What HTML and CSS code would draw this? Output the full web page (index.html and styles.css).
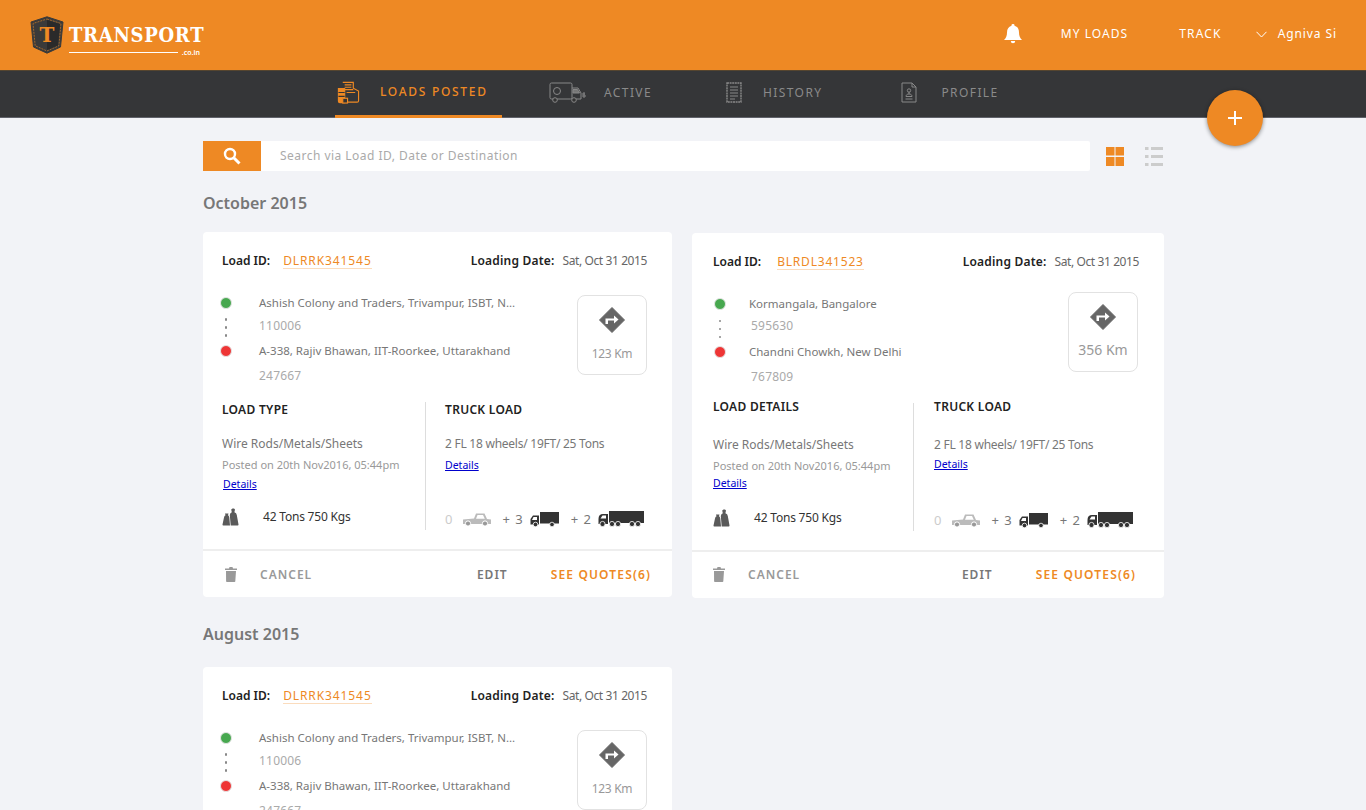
FILE: index.html
```html
<!DOCTYPE html>
<html lang="en">
<head>
<meta charset="utf-8">
<title>Transport</title>
<link rel="stylesheet" href="styles.css">
</head>
<body>
<svg class="defs" width="0" height="0">
  <symbol id="turn" viewBox="0 0 26 26"><path d="M13 0.5 25.5 13 13 25.5 0.5 13Z" fill="#666" stroke="#666" stroke-linejoin="round" stroke-width="1"/><path d="M8 18v-5.500h8.500V9.500l4.500 4-4.500 4v-3H10.500V18Z" fill="#fff" transform="translate(-1.500 -1)"/></symbol>
  <symbol id="weights" viewBox="0 0 17 18"><path d="M0.500 16.500 2 9.500Q2.300 7.800 3.500 7.300L3 5.500h3.500L6 7.300Q7 7.800 7.300 9.500L8 17.500H1.300Q.4 17.500.5 16.500Z" fill="#5a5a5a"/><path d="M8.700 17.500 7.800 7Q8 5 9.800 4.300L9.200 1.500 10.500.5h1.500l1 1-.6 2.800Q14.600 5 14.800 7L16.500 16.500Q16.600 17.500 15.700 17.500Z" fill="#5a5a5a"/></symbol>
  <symbol id="trash" viewBox="0 0 14 16"><path d="M1 2.500h4L5.500 1h3L9 2.500h4V4H1ZM2 5h10l-.7 10.200a.8.800 0 0 1-.8.800h-7.600a.8.800 0 0 1-.8-.8Z" fill="#999"/></symbol>
  <symbol id="pickup" viewBox="0 0 30 14"><path d="M1 7.500 12 6.500 14 1.500h8.500l2.500 5.500 4 .6v4.400H1Z" fill="#bbb"/><path d="M15.500 3h5.500l1.800 3.800h-8.800Z" fill="#fff"/><circle cx="6" cy="11.500" r="2.600" fill="#999" stroke="#fff"/><circle cx="23" cy="11.500" r="2.600" fill="#999" stroke="#fff"/></symbol>
  <symbol id="truck" viewBox="0 0 29 15"><path d="M10 0h19v11.500H10Z" fill="#333"/><path d="M9 3.500H3L.5 7v5.500H9Z" fill="#333"/><path d="M3.500 5H7v3H2Z" fill="#fff"/><circle cx="5.500" cy="12.500" r="2.300" fill="#333" stroke="#fff" stroke-width=".8"/><circle cx="22" cy="12.500" r="2.300" fill="#333" stroke="#fff" stroke-width=".8"/></symbol>
  <symbol id="trailer" viewBox="0 0 46 16"><path d="M11 0h35v12H11Z" fill="#333"/><path d="M10 3H5Q.5 3 .5 8v5H10Z" fill="#333"/><path d="M4.500 4.500h3.500v3H2.500Z" fill="#fff"/><g fill="#333" stroke="#fff" stroke-width=".8"><circle cx="4.500" cy="13" r="2.600"/><circle cx="14" cy="13" r="2.600"/><circle cx="20" cy="13" r="2.600"/><circle cx="34" cy="13" r="2.600"/><circle cx="40" cy="13" r="2.600"/></g></symbol>
</svg>

<header class="topbar">
  <a class="logo">
    <svg class="logo-mark" viewBox="0 0 34 38" width="34" height="38"><path d="M17 .8 33 6l-2.500 25L17 37.200 3.500 31 1 6Z" fill="#3a3a3a" stroke="#3a3a3a"/><path d="M17 3 31 7.500l-2.200 22.300L17 35 5.200 29.800 3 7.500Z" fill="none" stroke="#ee8924" stroke-width=".6" stroke-dasharray="2 1"/><path d="M17 4 30 8l-2 21.500L17 34Z" fill="#2a2a2a"/><text x="17" y="26" text-anchor="middle" class="logo-t">T</text></svg>
    <span class="logo-text">
      <span class="logo-name">TRANSPORT</span>
      <span class="logo-rule"></span>
      <span class="logo-tld">.co.in</span>
    </span>
  </a>
  <nav class="topnav">
    <svg class="bell" viewBox="0 0 18 20" width="18" height="20"><path d="M9 0a1.500 1.500 0 0 1 1.500 1.700C13.500 2.500 15 5 15 8.500c0 3.500 1 5.500 3 7.500H0c2-2 3-4 3-7.500C3 5 4.500 2.500 7.500 1.700A1.500 1.500 0 0 1 9 0ZM6.800 17h4.400a2.200 2.200 0 0 1-4.400 0Z" fill="#fff"/></svg>
    <a class="topnav-link my-loads">MY LOADS</a>
    <a class="topnav-link track">TRACK</a>
    <svg class="chev" viewBox="0 0 11 7" width="11" height="7"><path d="M.5.800 5.500 6 10.500.800" fill="none" stroke="#fff" stroke-width="1"/></svg>
    <a class="topnav-link user">Agniva Si</a>
  </nav>
</header>

<nav class="tabs">
  <a class="tab tab-active">
    <svg class="tab-icon" viewBox="0 0 24 24" width="23" height="23" fill="none" stroke="#ee8924" stroke-width="1.200"><path d="M6 1.500h11v6l5.500 3v10a1.500 1.500 0 0 1-1.500 1.500H11"/><path d="M8 4h7M8 6.500h7M8 9h9M10 12h9"/><path d="M1.500 8h6.500v14.500H3A1.500 1.500 0 0 1 1.500 21Z" fill="#ee8924"/><path d="M1.500 12h6.500M1.500 16h6.500" stroke="#333"/><rect x="6" y="18" width="5" height="5" fill="#333"/></svg>
    <span>LOADS POSTED</span>
  </a>
  <a class="tab tab-active-end"></a>
  <a class="tab">
    <svg class="tab-icon" viewBox="0 0 38 21" width="38" height="21" fill="none" stroke="#888" stroke-width="1"><rect x="1" y="1" width="22" height="16" rx="1.500"/><circle cx="8" cy="9" r="3.500"/><path d="M23 6h6l3 5v6h-9"/><path d="M24 7.500h4.500l2 3.500H24Z" fill="#777"/><circle cx="6" cy="18" r="2.300" fill="#333"/><circle cx="25" cy="18" r="2.300" fill="#333"/><path d="M33 12h3M33 14h4M35 10v6"/></svg>
    <span>ACTIVE</span>
  </a>
  <a class="tab tab-history">
    <svg class="tab-icon" viewBox="0 0 16 21" width="16" height="21" fill="none" stroke="#888" stroke-width="1"><path d="M1 1h14v19H1Z" stroke-dasharray="2 .6" stroke-width="1.400"/><path d="M4 5h8M4 8h8M4 11h8M4 14h8M4 17h5"/></svg>
    <span>HISTORY</span>
  </a>
  <a class="tab tab-profile">
    <svg class="tab-icon" viewBox="0 0 16 21" width="16" height="21" fill="none" stroke="#888" stroke-width="1"><path d="M1 1h10l4 4v15H1Z"/><path d="M11 1v4h4"/><circle cx="8" cy="8.500" r="1.700"/><path d="M8 10v2M5 14.500c0-1.500 1-2.500 3-2.500s3 1 3 2.500ZM4.500 17h7"/></svg>
    <span>PROFILE</span>
  </a>
</nav>

<button class="fab" type="button" aria-label="Add load">
  <svg viewBox="0 0 16 16" width="16" height="16"><path d="M7 1h2v6h6v2H9v6H7V9H1V7h6Z" fill="#fff"/></svg>
</button>

<main class="content">
  <div class="search-row">
    <button class="search-btn" type="button" aria-label="Search">
      <svg viewBox="0 0 18 18" width="18" height="18" fill="none" stroke="#fff"><circle cx="7" cy="7" r="5" stroke-width="2.400"/><path d="M11 11l5.500 5.500" stroke-width="3"/></svg>
    </button>
    <div class="search-input">Search via Load ID, Date or Destination</div>
    <div class="views">
      <svg viewBox="0 0 18 19" width="18" height="19" fill="#ee8924"><rect width="8.500" height="8.500"/><rect x="9.500" width="8.500" height="8.500"/><rect y="10" width="8.500" height="9"/><rect x="9.500" y="10" width="8.500" height="9"/></svg>
      <svg viewBox="0 0 18 19" width="18" height="19" fill="#ccc"><rect width="3.500" height="3"/><rect x="6" width="12" height="3"/><rect y="8" width="3.500" height="3"/><rect x="6" y="8" width="12" height="3"/><rect y="16" width="3.500" height="3"/><rect x="6" y="16" width="12" height="3"/></svg>
    </div>
  </div>

  <h2 class="month">October 2015</h2>
  <div class="cards">
    <article class="card card-a">
      <div class="card-head">
        <div><b class="lbl">Load ID:</b><a class="load-id">DLRRK341545</a></div>
        <div><b class="lbl lbl-date">Loading Date:</b><span class="date">Sat, Oct 31 2015</span></div>
      </div>
      <div class="route">
        <div class="stops">
          <div class="stop"><i class="dot green"></i><span class="addr">Ashish Colony and Traders, Trivampur, ISBT, N...</span></div>
          <div class="pin"><span class="dots"><i></i><i></i><i></i></span><span>110006</span></div>
          <div class="stop"><i class="dot red"></i><span class="addr">A-338, Rajiv Bhawan, IIT-Roorkee, Uttarakhand</span></div>
          <div class="pin"><span class="dots"></span><span>247667</span></div>
        </div>
        <div class="dist"><svg width="26" height="26"><use href="#turn"/></svg><span>123 Km</span></div>
      </div>
      <div class="info">
        <div class="col col-l">
          <h3>LOAD TYPE</h3>
          <p class="txt">Wire Rods/Metals/Sheets</p>
          <p class="sub">Posted on 20th Nov2016, 05:44pm</p>
          <a class="more more-l">Details</a>
          <div class="tons"><svg width="17" height="18"><use href="#weights"/></svg><span>42 Tons 750 Kgs</span></div>
        </div>
        <div class="col col-r">
          <h3>TRUCK LOAD</h3>
          <p class="txt">2 FL 18 wheels/ 19FT/ 25 Tons</p>
          <a class="more">Details</a>
          <div class="fleet">
            <span class="zero">0</span><svg width="30" height="14"><use href="#pickup"/></svg>
            <span class="n">+ 3</span><svg width="29" height="15"><use href="#truck"/></svg>
            <span class="n n2">+ 2</span><svg width="46" height="16"><use href="#trailer"/></svg>
          </div>
        </div>
      </div>
      <footer class="card-foot">
        <svg width="14" height="16"><use href="#trash"/></svg>
        <a class="cancel">CANCEL</a>
        <a class="edit">EDIT</a>
        <a class="quotes">SEE QUOTES(6)</a>
      </footer>
    </article>

    <article class="card card-b">
      <div class="card-head">
        <div><b class="lbl">Load ID:</b><a class="load-id">BLRDL341523</a></div>
        <div><b class="lbl lbl-date">Loading Date:</b><span class="date">Sat, Oct 31 2015</span></div>
      </div>
      <div class="route">
        <div class="stops">
          <div class="stop"><i class="dot green"></i><span class="addr">Kormangala, Bangalore</span></div>
          <div class="pin"><span class="dots"><i></i><i></i><i></i></span><span>595630</span></div>
          <div class="stop"><i class="dot red"></i><span class="addr">Chandni Chowkh, New Delhi</span></div>
          <div class="pin"><span class="dots"></span><span>767809</span></div>
        </div>
        <div class="dist"><svg width="26" height="26"><use href="#turn"/></svg><span>356 Km</span></div>
      </div>
      <div class="info">
        <div class="col col-l">
          <h3>LOAD DETAILS</h3>
          <p class="txt">Wire Rods/Metals/Sheets</p>
          <p class="sub">Posted on 20th Nov2016, 05:44pm</p>
          <a class="more">Details</a>
          <div class="tons"><svg width="17" height="18"><use href="#weights"/></svg><span>42 Tons 750 Kgs</span></div>
        </div>
        <div class="col col-r">
          <h3>TRUCK LOAD</h3>
          <p class="txt">2 FL 18 wheels/ 19FT/ 25 Tons</p>
          <a class="more">Details</a>
          <div class="fleet">
            <span class="zero">0</span><svg width="30" height="14"><use href="#pickup"/></svg>
            <span class="n">+ 3</span><svg width="29" height="15"><use href="#truck"/></svg>
            <span class="n n2">+ 2</span><svg width="46" height="16"><use href="#trailer"/></svg>
          </div>
        </div>
      </div>
      <footer class="card-foot">
        <svg width="14" height="16"><use href="#trash"/></svg>
        <a class="cancel">CANCEL</a>
        <a class="edit">EDIT</a>
        <a class="quotes">SEE QUOTES(6)</a>
      </footer>
    </article>
  </div>

  <h2 class="month month-2">August 2015</h2>
  <div class="cards">
    <article class="card card-a">
      <div class="card-head">
        <div><b class="lbl">Load ID:</b><a class="load-id">DLRRK341545</a></div>
        <div><b class="lbl lbl-date">Loading Date:</b><span class="date">Sat, Oct 31 2015</span></div>
      </div>
      <div class="route">
        <div class="stops">
          <div class="stop"><i class="dot green"></i><span class="addr">Ashish Colony and Traders, Trivampur, ISBT, N...</span></div>
          <div class="pin"><span class="dots"><i></i><i></i><i></i></span><span>110006</span></div>
          <div class="stop"><i class="dot red"></i><span class="addr">A-338, Rajiv Bhawan, IIT-Roorkee, Uttarakhand</span></div>
          <div class="pin"><span class="dots"></span><span>247667</span></div>
        </div>
        <div class="dist"><svg width="26" height="26"><use href="#turn"/></svg><span>123 Km</span></div>
      </div>
    </article>
  </div>
</main>
</body>
</html>
```
FILE: styles.css
```css
* { box-sizing: border-box; }
html, body { margin: 0; height: 810px; overflow: hidden; }
body {
  position: relative;
  background: #f2f3f7;
  font-family: "Noto Sans", "Open Sans", sans-serif;
  color: #777;
}
a { display: block; }
h2, h3, p { margin: 0; }
.defs { position: absolute; }

.topbar {
  height: 70px;
  background: #ee8924;
  display: flex;
  align-items: center;
  justify-content: space-between;
  padding: 0 29px 0 30px;
}
.logo { display: flex; align-items: flex-start; gap: 5px; height: 38px; margin-top: -1px; }
.logo-t { font: 700 20px "DejaVu Serif", serif; fill: #ee8924; }
.logo-text { display: block; width: 135px; color: #fff; margin-top: 9px; position: relative; }
.logo-name { display: block; font: 700 20px/20px "DejaVu Serif Condensed", "DejaVu Serif", serif; font-stretch: condensed; letter-spacing: .7px; white-space: nowrap; }
.logo-rule { display: block; height: 1px; width: 109px; background: #fff; margin-top: 7px; }
.logo-tld { position: absolute; right: 4px; top: 24px; font-size: 7px; font-weight: 600; line-height: 8px; }

.topnav { display: flex; align-items: center; color: #fff; padding-bottom: 2px; }
.topnav-link { font-size: 12px; line-height: 16px; }
.bell { margin-right: 39px; }
.my-loads { margin-right: 51px; letter-spacing: 1.050px; }
.track { margin-right: 34px; letter-spacing: 1.200px; }
.chev { margin-right: 11px; }
.user { letter-spacing: .9px; }

.tabs {
  height: 48px;
  background: #353638;
  display: flex;
  align-items: stretch;
  padding-left: 335px;
  border-top: 1px solid #55452f;
  border-bottom: 1px solid #60626a;
}
.tab {
  display: flex;
  align-items: center;
  gap: 17px;
  font-size: 12px;
  letter-spacing: 1.400px;
  color: #8a8a8a;
  line-height: 16px;
  padding-bottom: 3px;
}
.tab-active {
  width: 167px;
  padding-left: 2px;
  padding-bottom: 2px;
  gap: 20px;
  color: #ee8924;
  font-weight: 500;
  letter-spacing: 1.700px;
  border-bottom: 3px solid #ee8924;
  margin-bottom: -1px;
}
.tab-active-end { width: 47px; }
.tab-history { margin-left: 74px; gap: 21px; }
.tab-profile { margin-left: 79px; gap: 24px; }

.fab {
  position: absolute;
  left: 1207px;
  top: 90px;
  width: 56px;
  height: 56px;
  border: 0;
  border-radius: 50%;
  background: #ee8924;
  box-shadow: 0 1px 4px rgba(0,0,0,.45);
  display: flex;
  align-items: center;
  justify-content: center;
  padding: 0;
}

.content { width: 961px; margin-left: 203px; padding-top: 23px; }
.search-row { display: flex; align-items: center; height: 30px; }
.search-btn {
  width: 58px;
  height: 30px;
  border: 0;
  padding: 0;
  background: #ee8924;
  display: flex;
  align-items: center;
  justify-content: center;
}
.search-input {
  width: 829px;
  height: 30px;
  background: #fff;
  border-radius: 0 2px 2px 0;
  padding-left: 19px;
  font-size: 12px;
  line-height: 30px;
  letter-spacing: .47px;
  color: #aaa;
}
.views { display: flex; gap: 21px; margin-left: 16px; }

.month { font-size: 16px; line-height: 22px; font-weight: 600; color: #777; margin: 21px 0 18px; }
.month-2 { margin: 25px 0 22px; }

.cards { display: flex; gap: 20px; align-items: flex-start; }
.card { background: #fff; border-radius: 4px; display: flex; flex-direction: column; padding-top: 20px; height: 365px; }
.card-a { width: 469px; }
.card-b { width: 472px; margin-top: 1px; }

.card-head { display: flex; justify-content: space-between; height: 17px; align-items: center; font-size: 12px; padding-right: 25px; }
.card-a .card-head { padding-left: 19px; }
.card-b .card-head { padding-left: 21px; }
.card-head > div { display: flex; align-items: center; }
.lbl { font-weight: 600; color: #222; }
.lbl-date { letter-spacing: .2px; }
.load-id { margin-left: 13px; color: #ee8924; letter-spacing: .9px; border-bottom: 1px solid #fbdcbd; line-height: 15px; }
.card-b .load-id { margin-left: 16px; letter-spacing: .8px; }
.date { margin-left: 8px; color: #666; letter-spacing: -.4px; }

.route { display: flex; justify-content: space-between; padding-right: 25px; height: 80px; }
.card-a .route { padding-left: 17px; margin-top: 26px; }
.card-b .route { padding-left: 22px; margin-top: 22px; padding-right: 26px; }
.stops { display: flex; flex-direction: column; font-size: 11.500px; }
.card-b .stops { padding-top: 3px; }
.stop, .pin { display: flex; align-items: center; flex: none; }
.stop { height: 18px; }
.pin { color: #aaa; font-size: 12px; letter-spacing: .2px; }
.card-a .stops { margin-top: -1px; }
.card-a .pin:nth-child(2) { height: 26px; }
.card-a .stop:nth-child(3) { height: 26px; }
.card-a .pin:nth-child(4) { height: 22px; }
.card-b .pin:nth-child(2) { height: 24px; }
.card-b .stop:nth-child(3) { height: 30px; }
.card-b .pin:nth-child(4) { height: 18px; }
.addr { margin-left: 27px; padding-bottom: 2px; white-space: nowrap; color: #777; }
.card-b .addr { margin-left: 23px; }
.dot { width: 12px; height: 12px; border-radius: 50%; border: 1px solid #e4e4e4; flex: none; }
.green { background: #47a84f; }
.red { background: #ee3535; }
.dots { width: 12px; margin-right: 27px; padding-top: 5px; display: flex; flex-direction: column; align-items: center; gap: 5.500px; }
.card-b .dots { margin-right: 25px; padding-top: 8px; }
.dots i { width: 2.500px; height: 2.500px; border-radius: 50%; background: #888; }
.dist {
  width: 70px;
  height: 80px;
  border: 1px solid #e2e2e2;
  border-radius: 8px;
  display: flex;
  flex-direction: column;
  align-items: center;
  padding-top: 11px;
  gap: 13px;
  font-size: 12px;
  line-height: 16px;
  color: #999;
  letter-spacing: -.3px;
}
.card-b .dist { font-size: 14px; letter-spacing: 0; gap: 12px; }

.info { display: flex; }
.card-a .info { margin-top: 27px; padding-left: 19px; }
.card-b .info { margin-top: 31px; padding-left: 21px; }
.col { height: 128px; display: flex; flex-direction: column; }
.col-l { width: 203px; }
.col-r { border-left: 1px solid #ddd; padding-left: 19px; }
.card-b .col-l { width: 200px; }
.card-b .col-r { padding-left: 20px; }
h3 { font-size: 12px; line-height: 16px; font-weight: 600; color: #222; letter-spacing: .3px; }
.card-b h3 { margin-top: -4px; }
.txt { font-size: 12px; line-height: 16px; color: #777; margin-top: 18px; white-space: nowrap; }
.card-b .txt { margin-top: 22px; }
.col-r .txt { letter-spacing: -.25px; }
.sub { font-size: 11px; line-height: 14px; color: #999; margin-top: 6px; white-space: nowrap; }
.more { font-size: 10.500px; line-height: 14px; color: #00c; text-decoration: underline; margin-top: 5px; width: max-content; }
.card-b .more { margin-top: 3px; }
.more-l { margin-left: 1px; }
.col-r .more { margin-top: 6px; }
.card-b .col-r .more { margin-top: 4px; }
.tons { display: flex; align-items: center; gap: 24px; margin-top: auto; padding-bottom: 4px; font-size: 12px; line-height: 16px; color: #333; letter-spacing: -.2px; }
.fleet { display: flex; align-items: center; margin-top: auto; padding-bottom: 3px; font-size: 13px; line-height: 16px; color: #777; }
.zero { color: #ccc; margin-right: 10px; }
.n { margin: 0 7px 0 10px; white-space: nowrap; word-spacing: 2px; }
.n2 { margin-left: 12px; }

.card-foot {
  margin-top: auto;
  height: 48px;
  border-top: 2px solid #eee;
  display: flex;
  align-items: center;
  font-size: 12px;
  font-weight: 600;
  letter-spacing: 1px;
  color: #888;
  padding-left: 21px;
}
.card-b .card-foot { padding-left: 20px; padding-bottom: 2px; }
.cancel { margin-left: 22px; color: #999; }
.card-b .cancel { margin-left: 22px; }
.edit { margin-left: auto; color: #777; }
.quotes { margin-left: 43px; margin-right: 21px; color: #ee8924; letter-spacing: 1.150px; }
.card-b .quotes { margin-right: 28px; }
```
